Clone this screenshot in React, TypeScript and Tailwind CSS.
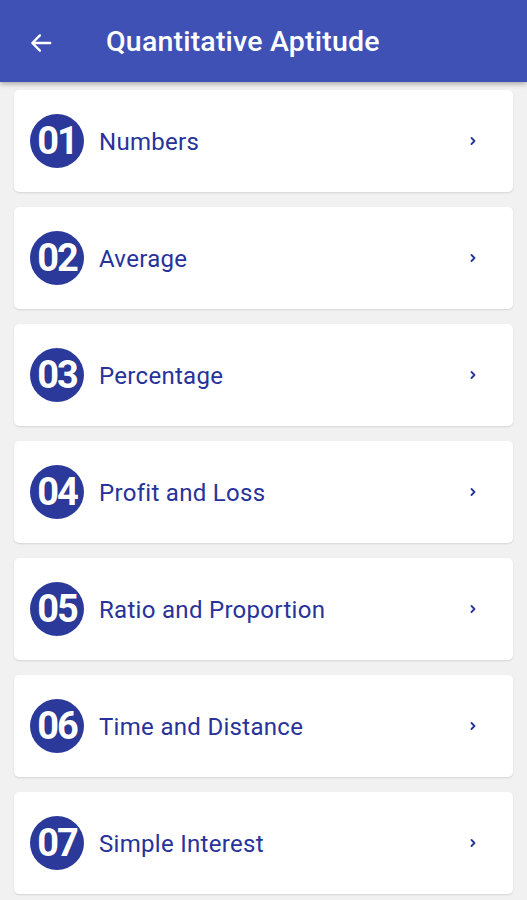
import React from "react";

const topics = [
  "Numbers",
  "Average",
  "Percentage",
  "Profit and Loss",
  "Ratio and Proportion",
  "Time and Distance",
  "Simple Interest",
];

function ArrowLeft() {
  return (
    <svg width="26" height="26" viewBox="0 0 24 24" fill="none">
      <path
        d="M20.5 12H4.5M11 5l-7 7 7 7"
        stroke="white"
        strokeWidth="2.2"
        strokeLinecap="round"
        strokeLinejoin="round"
      />
    </svg>
  );
}

function Chevron() {
  return (
    <svg width="8" height="10" viewBox="0 0 8 10" fill="none">
      <path
        d="M2.5 2l3 3-3 3"
        stroke="#283593"
        strokeWidth="1.8"
        strokeLinecap="round"
        strokeLinejoin="round"
      />
    </svg>
  );
}

export default function App() {
  return (
    <div
      className="w-[527px] h-[900px] bg-[#f1f1f1] overflow-hidden"
      style={{ fontFamily: "Roboto, 'Liberation Sans', sans-serif" }}
    >
      <header className="h-[82px] bg-[#3f51b5] flex items-center pl-[28px] pt-[3px] shadow-[0_2px_5px_rgba(0,0,0,0.3)] relative z-10">
        <ArrowLeft />
        <h1 className="ml-[52px] text-white text-[28.5px] font-medium tracking-[0.2px]">
          Quantitative Aptitude
        </h1>
      </header>
      <div className="flex flex-col gap-[15px] pt-[8px] px-[14px]">
        {topics.map((t, i) => (
          <div
            key={t}
            className="h-[102px] bg-white rounded-[5px] shadow-[0_1px_2px_rgba(0,0,0,0.12)] flex items-center pl-[16px] pr-[36px]"
          >
            <div className="w-[54px] h-[54px] rounded-full bg-[#2b3a9a] flex items-center justify-center shrink-0">
              <span className="text-white font-bold text-[38px] leading-none tracking-[-2px] [text-shadow:0_0_1px_#1a237e]">
                {String(i + 1).padStart(2, "0")}
              </span>
            </div>
            <span className="ml-[15px] pt-[2px] text-[#27329a] text-[24px] tracking-[0.3px] flex-1">
              {t}
            </span>
            <Chevron />
          </div>
        ))}
      </div>
    </div>
  );
}
